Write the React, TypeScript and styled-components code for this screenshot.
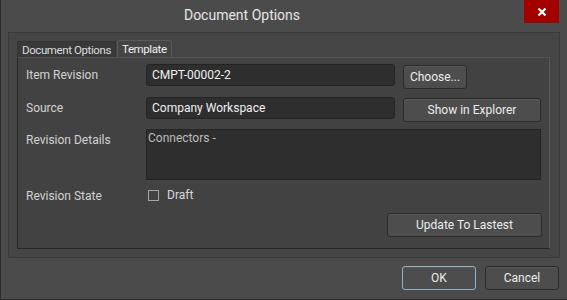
import React from 'react';
import styled, { createGlobalStyle } from 'styled-components';

const GlobalStyle = createGlobalStyle`
  html, body {
    margin: 0;
    padding: 0;
    background: #4b4b4b;
  }
  * {
    box-sizing: border-box;
  }
`;

const font = `Roboto, "Noto Sans", sans-serif`;

//dialog frame
const Window = styled.div`
  width: 567px;
  height: 300px;
  background: #4b4b4b;
  border-left: 1px solid #2c2c2c;
  border-bottom: 1px solid #2c2c2c;
  display: flex;
  flex-direction: column;
  font-family: ${font};
  color: #d6d6d6;
`;

const TitleBar = styled.div`
  height: 32px;
  display: grid;
  grid-template-columns: 482px 1fr;
  align-items: start;
`;

const Title = styled.div`
  text-align: center;
  font-size: 14px;
  line-height: 31px;
  color: #e6e6e6;
`;

const CloseButton = styled.div`
  justify-self: end;
  margin-right: 8px;
  width: 35px;
  height: 23px;
  background: #a30000;
  display: flex;
  align-items: center;
  justify-content: center;
`;

const Body = styled.div`
  padding: 0 7px 0 7px;
`;

const GroupBox = styled.div`
  height: 226px;
  background: #454545;
  border: 1px solid #3a3a3a;
  padding: 7px 9px 8px 8px;
  display: flex;
  flex-direction: column;
`;

const Tabs = styled.div`
  display: flex;
  align-items: flex-end;
  height: 17px;
  gap: 1px;
`;

const Tab = styled.div<{ active?: boolean }>`
  height: ${(p) => (p.active ? '17px' : '16px')};
  padding: 0 4px;
  font-size: 11.5px;
  letter-spacing: -0.4px;
  line-height: ${(p) => (p.active ? '17px' : '16px')};
  border: 1px solid ${(p) => (p.active ? '#5a5a5a' : '#333')};
  border-bottom: none;
  border-radius: 3px 3px 0 0;
  background: ${(p) => (p.active ? '#444' : '#393939')};
  color: ${(p) => (p.active ? '#f0f0f0' : '#dcdcdc')};
  white-space: nowrap;
`;

const Panel = styled.div`
  flex: 1;
  background: #424242;
  border: 1px solid #5a5a5a;
  border-left-color: #262626;
  border-bottom-color: #262626;
  border-top-color: #555;
  padding: 6px 7px 0 8px;
  display: flex;
  flex-direction: column;
`;

const Row = styled.div<{ top?: number }>`
  display: flex;
  align-items: flex-start;
  margin-top: ${(p) => p.top ?? 0}px;
`;

const Label = styled.div<{ height?: number }>`
  width: 120px;
  font-size: 12px;
  line-height: ${(p) => p.height ?? 22}px;
  color: #d2d2d2;
`;

const Input = styled.div`
  width: 249px;
  height: 22px;
  background: #2e2e2e;
  border: 1px solid #242424;
  border-radius: 3px;
  padding: 0 5px;
  font-size: 12px;
  line-height: 20px;
  color: #f0f0f0;
`;

const TextArea = styled.div`
  width: 395px;
  height: 51px;
  background: #2e2e2e;
  border: 1px solid #252525;
  padding: 0 1px;
  font-size: 12px;
  line-height: 16px;
  color: #bdbdbd;
`;

const Button = styled.div<{ width: number; primary?: boolean }>`
  width: ${(p) => p.width}px;
  height: 24px;
  background: #4d4d4d;
  border: 1px solid ${(p) => (p.primary ? '#8fb3c9' : '#2b2b2b')};
  border-radius: 3px;
  box-shadow: inset 0 1px 0 rgba(255, 255, 255, 0.06);
  font-size: 12px;
  line-height: 22px;
  text-align: center;
  color: #ececec;
`;

const SideButton = styled(Button)`
  margin-left: 8px;
  margin-top: 1px;
`;

const Check = styled.div`
  width: 11px;
  height: 11px;
  border: 1px solid #a6a6a6;
  margin: 0 8px 0 2px;
`;

const CheckRow = styled.div`
  display: flex;
  align-items: center;
  font-size: 12px;
  color: #dadada;
`;

const RightRow = styled.div<{ top?: number }>`
  display: flex;
  justify-content: flex-end;
  margin-top: ${(p) => p.top ?? 0}px;
`;

const Footer = styled.div`
  display: flex;
  justify-content: flex-end;
  gap: 9px;
  padding: 8px 8px 0 0;
`;

export default function App() {
  return (
    <>
      <GlobalStyle />
      <Window>
        <TitleBar>
          <Title>Document Options</Title>
          <CloseButton>
            <svg width="10" height="10" viewBox="0 0 10 10">
              <path d="M1.5 1.5 L8.5 8.5 M8.5 1.5 L1.5 8.5" stroke="#fff" strokeWidth="2.2" />
            </svg>
          </CloseButton>
        </TitleBar>
        <Body>
          <GroupBox>
            <Tabs>
              <Tab>Document Options</Tab>
              <Tab active>Template</Tab>
            </Tabs>
            <Panel>
              <Row>
                <Label>Item Revision</Label>
                <Input>CMPT-00002-2</Input>
                <SideButton width={64}>Choose...</SideButton>
              </Row>
              <Row top={8}>
                <Label>Source</Label>
                <Input>Company Workspace</Input>
                <SideButton width={138}>Show in Explorer</SideButton>
              </Row>
              <Row top={7}>
                <Label>Revision Details</Label>
                <TextArea>Connectors -</TextArea>
              </Row>
              <Row top={8}>
                <Label height={16}>Revision State</Label>
                <CheckRow>
                  <Check />
                  Draft
                </CheckRow>
              </Row>
              <RightRow top={9}>
                <Button width={155}>Update To Lastest</Button>
              </RightRow>
            </Panel>
          </GroupBox>
        </Body>
        <Footer>
          <Button width={74} primary>OK</Button>
          <Button width={74}>Cancel</Button>
        </Footer>
      </Window>
    </>
  );
}
